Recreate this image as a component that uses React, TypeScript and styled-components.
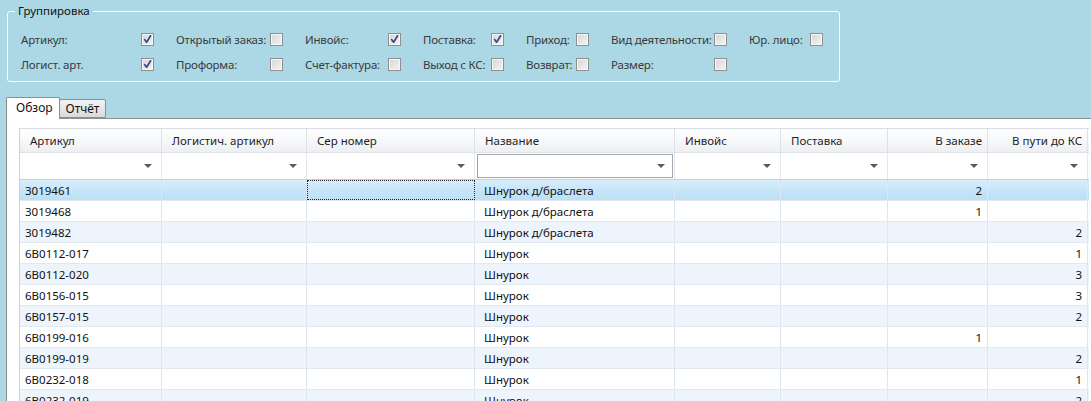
import React from 'react';
import styled, { createGlobalStyle } from 'styled-components';

const Global = createGlobalStyle`
  html, body { margin: 0; padding: 0; overflow: hidden; background: #acd8e5; }
  body {
    font-family: 'Segoe UI', 'Noto Sans', 'DejaVu Sans', sans-serif;
    font-size: 11.5px;
    color: #1e1e1e;
  }
  * { box-sizing: border-box; }
`;

const Page = styled.div`
  width: 1091px;
  height: 401px;
  padding-top: 3px;
  display: flex;
  flex-direction: column;
  overflow: hidden;
`;

const GroupBox = styled.fieldset`
  margin: 0 0 0 7px;
  width: 833px;
  min-width: 0;
  border: 1px solid #ffffff;
  border-radius: 3px;
  padding: 0 0 5px 7px;
`;

const Legend = styled.legend`
  padding: 0 3px;
  line-height: 16px;
  color: #111;
`;

const OptionGrid = styled.div`
  display: grid;
  grid-template-columns: 133px 107px 96px 81px 63px 116px 74px;
  grid-auto-rows: 24px;
  column-gap: 22px;
  row-gap: 1px;
  margin: 8px 0 0 6px;
`;

const Option = styled.label`
  display: flex;
  align-items: center;
  justify-content: space-between;
  gap: 2px;
  color: #3a3a3a;
  letter-spacing: -0.2px;
  white-space: nowrap;
`;

const Box = styled.span`
  width: 13px;
  height: 13px;
  flex: none;
  border: 1px solid #8e8f8f;
  background: linear-gradient(135deg, #d6d6d6 0%, #f4f4f4 100%);
  box-shadow: inset 0 0 0 1px #f6f6f6;
  display: flex;
  align-items: center;
  justify-content: center;
`;

const Check: React.FC<{ checked?: boolean }> = ({ checked }) => (
  <Box>
    {checked && (
      <svg width="11" height="11" viewBox="0 0 11 11">
        <path d="M2.6 5.6 L4.6 8.2 L8.6 1.8" fill="none" stroke="#34488a" strokeWidth="1.7" strokeLinecap="round" strokeLinejoin="round" />
      </svg>
    )}
  </Box>
);

const TabStrip = styled.div`
  display: flex;
  align-items: flex-end;
  height: 21px;
  margin: 15px 0 0 6px;
  position: relative;
  z-index: 2;
`;

const Tab = styled.div<{ $active?: boolean }>`
  height: ${p => (p.$active ? 22 : 19)}px;
  margin-bottom: ${p => (p.$active ? -1 : 0)}px;
  margin-left: ${p => (p.$active ? 0 : -1)}px;
  padding: ${p => (p.$active ? '0 6px 0 9px' : '0 6px')};
  border: 1px solid #8c8e94;
  border-bottom: ${p => (p.$active ? 'none' : '1px solid #8c8e94')};
  border-radius: 2px 2px 0 0;
  background: ${p => (p.$active ? '#ffffff' : 'linear-gradient(#f3f3f3, #dadada)')};
  line-height: ${p => (p.$active ? 20 : 17)}px;
  font-size: 12px;
  color: #111;
  position: relative;
  z-index: ${p => (p.$active ? 2 : 1)};
`;

const Panel = styled.div`
  flex: 1;
  margin-left: 6px;
  border-left: 1px solid #8c8e94;
  border-top: 1px solid #8c8e94;
  background: #ffffff;
  padding: 9px 0 0 12px;
  overflow: hidden;
`;

const Grid = styled.div`
  width: 1070px;
  border-left: 1px solid #c9d2da;
  border-top: 1px solid #d5dce2;
`;

const COLS = '142px 145px 168px 200px 106px 107px 100px 100px';

const HeaderRow = styled.div`
  display: grid;
  grid-template-columns: ${COLS};
  height: 24px;
  background: linear-gradient(#ffffff 0%, #f7f8f9 50%, #eceef0 100%);
  border-bottom: 1px solid #dfe3e7;
`;

const HeaderCell = styled.div<{ $right?: boolean }>`
  display: flex;
  align-items: center;
  justify-content: ${p => (p.$right ? 'flex-end' : 'flex-start')};
  padding: ${p => (p.$right ? '0 5px 0 0' : '0 0 0 10px')};
  border-right: 1px solid #dde2e7;
  white-space: nowrap;
  overflow: hidden;
  color: #1e1e1e;
`;

const FilterRow = styled.div`
  display: grid;
  grid-template-columns: ${COLS};
  height: 27px;
  background: #ffffff;
  border-bottom: 1px solid #c8d1d9;
`;

const FilterCell = styled.div`
  padding: 1px 1px 1px 2px;
  border-right: 1px solid #e3e8ec;
`;

const FilterBox = styled.div<{ $focused?: boolean }>`
  height: 100%;
  display: flex;
  align-items: center;
  justify-content: flex-end;
  padding-right: 7px;
  border: 1px solid ${p => (p.$focused ? '#a4a7ab' : 'transparent')};
`;

const Arrow = () => (
  <svg width="8" height="4" viewBox="0 0 8 4">
    <path d="M0 0 L8 0 L4 4 Z" fill="#5a5a5a" />
  </svg>
);

const DataRow = styled.div<{ $alt?: boolean; $selected?: boolean }>`
  display: grid;
  grid-template-columns: ${COLS};
  height: 21px;
  border-bottom: 1px solid #e1e8f0;
  background: ${p =>
    p.$selected
      ? 'linear-gradient(#d8eefb 0%, #c8e6f8 45%, #bce0f5 100%)'
      : p.$alt
      ? '#eef4fb'
      : '#ffffff'};
`;

const DataCell = styled.div<{ $right?: boolean; $indent?: number; $focus?: boolean }>`
  display: flex;
  align-items: center;
  justify-content: ${p => (p.$right ? 'flex-end' : 'flex-start')};
  padding: ${p => (p.$right ? '0 5px 0 0' : `0 0 0 ${p.$indent ?? 5}px`)};
  border-right: 1px solid #dde5ee;
  white-space: nowrap;
  overflow: hidden;
  color: #111;
  outline: ${p => (p.$focus ? '1px dotted #222' : 'none')};
  outline-offset: -1px;
`;

const columns = [
  { title: 'Артикул' },
  { title: 'Логистич. артикул' },
  { title: 'Сер номер' },
  { title: 'Название', indent: 9 },
  { title: 'Инвойс' },
  { title: 'Поставка' },
  { title: 'В заказе', right: true },
  { title: 'В пути до КС', right: true },
];

const rows: { art: string; name: string; order?: string; way?: string }[] = [
  { art: '3019461', name: 'Шнурок д/браслета', order: '2' },
  { art: '3019468', name: 'Шнурок д/браслета', order: '1' },
  { art: '3019482', name: 'Шнурок д/браслета', way: '2' },
  { art: '6B0112-017', name: 'Шнурок', way: '1' },
  { art: '6B0112-020', name: 'Шнурок', way: '3' },
  { art: '6B0156-015', name: 'Шнурок', way: '3' },
  { art: '6B0157-015', name: 'Шнурок', way: '2' },
  { art: '6B0199-016', name: 'Шнурок', order: '1' },
  { art: '6B0199-019', name: 'Шнурок', way: '2' },
  { art: '6B0232-018', name: 'Шнурок', way: '1' },
  { art: '6B0232-019', name: 'Шнурок', way: '2' },
];

const options: { label: string; checked?: boolean }[][] = [
  [
    { label: 'Артикул:', checked: true },
    { label: 'Открытый заказ:' },
    { label: 'Инвойс:', checked: true },
    { label: 'Поставка:', checked: true },
    { label: 'Приход:' },
    { label: 'Вид деятельности:' },
    { label: 'Юр. лицо:' },
  ],
  [
    { label: 'Логист. арт.', checked: true },
    { label: 'Проформа:' },
    { label: 'Счет-фактура:' },
    { label: 'Выход с КС:' },
    { label: 'Возврат:' },
    { label: 'Размер:' },
  ],
];

export default function App() {
  return (
    <>
      <Global />
      <Page>
        <GroupBox>
          <Legend>Группировка</Legend>
          <OptionGrid>
            {options.map((row, ri) =>
              row.map(o => (
                <Option key={ri + o.label}>
                  <span>{o.label}</span>
                  <Check checked={o.checked} />
                </Option>
              ))
            )}
          </OptionGrid>
        </GroupBox>

        <TabStrip>
          <Tab $active>Обзор</Tab>
          <Tab>Отчёт</Tab>
        </TabStrip>

        <Panel>
          <Grid>
            <HeaderRow>
              {columns.map(c => (
                <HeaderCell key={c.title} $right={c.right}>
                  {c.title}
                </HeaderCell>
              ))}
            </HeaderRow>
            <FilterRow>
              {columns.map(c => (
                <FilterCell key={c.title}>
                  <FilterBox $focused={c.title === 'Название'}>
                    <Arrow />
                  </FilterBox>
                </FilterCell>
              ))}
            </FilterRow>
            {rows.map((r, i) => (
              <DataRow key={r.art} $selected={i === 0} $alt={i % 2 === 0}>
                <DataCell>{r.art}</DataCell>
                <DataCell />
                <DataCell $focus={i === 0} />
                <DataCell $indent={9}>{r.name}</DataCell>
                <DataCell />
                <DataCell />
                <DataCell $right>{r.order}</DataCell>
                <DataCell $right>{r.way}</DataCell>
              </DataRow>
            ))}
          </Grid>
        </Panel>
      </Page>
    </>
  );
}
